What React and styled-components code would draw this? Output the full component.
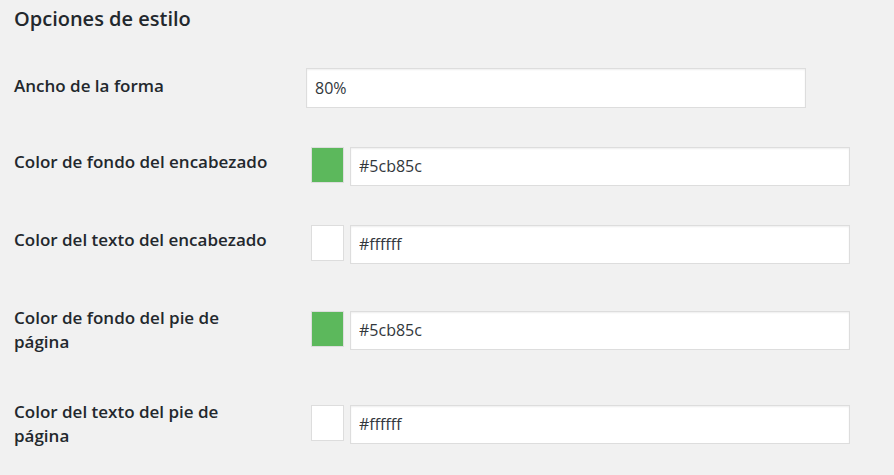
import React from "react";
import styled, { createGlobalStyle } from "styled-components";

const Global = createGlobalStyle`
  html, body { margin: 0; padding: 0; background: #f1f1f1; }
  body {
    font-family: "Open Sans", "Noto Sans", "Liberation Sans", sans-serif;
    color: #23282d;
  }
`;

const Page = styled.div`
  padding: 4px 14px 0 14px;
`;

const Title = styled.h2`
  margin: 0;
  font-size: 20px;
  font-weight: 600;
  line-height: 30px;
  color: #23282d;
`;

const Table = styled.div`
  display: grid;
  grid-template-columns: 268px 1fr;
  margin-top: 14px;
`;

const Label = styled.div`
  align-self: start;
  padding: ${(p) => (p.$first ? "26px" : "23px")} 10px 23px 0;
  font-size: 17px;
  font-weight: 600;
  line-height: 24px;
  color: #23282d;
`;

const Field = styled.div`
  align-self: center;
  display: flex;
  align-items: flex-start;
  gap: 6px;
  padding: 19.5px 0 19.5px ${(p) => (p.$indent ? "29px" : "24px")};
`;

const TextInput = styled.input`
  box-sizing: border-box;
  width: 500px;
  height: ${(p) => p.$h || 39}px;
  margin: 0;
  padding: 0 8px;
  border: 1px solid #dddddd;
  border-radius: 0;
  background: #ffffff;
  box-shadow: inset 0 1px 2px rgba(0, 0, 0, 0.07);
  font-family: "Open Sans", "Noto Sans", sans-serif;
  font-size: 16px;
  color: #32373c;
  outline: none;
`;

const Swatch = styled.span`
  box-sizing: border-box;
  display: block;
  width: 33px;
  height: 36px;
  border: 1px solid #dddddd;
  background: ${(p) => p.$color};
`;

const rows = [
  { label: "Color de fondo del encabezado", color: "#5cb85c", value: "#5cb85c" },
  { label: "Color del texto del encabezado", color: "#ffffff", value: "#ffffff" },
  { label: "Color de fondo del pie de página", color: "#5cb85c", value: "#5cb85c" },
  { label: "Color del texto del pie de página", color: "#ffffff", value: "#ffffff" },
];

export default function App() {
  return (
    <>
      <Global />
      <Page>
        <Title>Opciones de estilo</Title>
        <Table>
          <Label $first>Ancho de la forma</Label>
          <Field>
            <TextInput $h={40} defaultValue="80%" />
          </Field>
          {rows.map((r) => (
            <React.Fragment key={r.label}>
              <Label>{r.label}</Label>
              <Field $indent>
                <Swatch $color={r.color} />
                <TextInput defaultValue={r.value} />
              </Field>
            </React.Fragment>
          ))}
        </Table>
      </Page>
    </>
  );
}
